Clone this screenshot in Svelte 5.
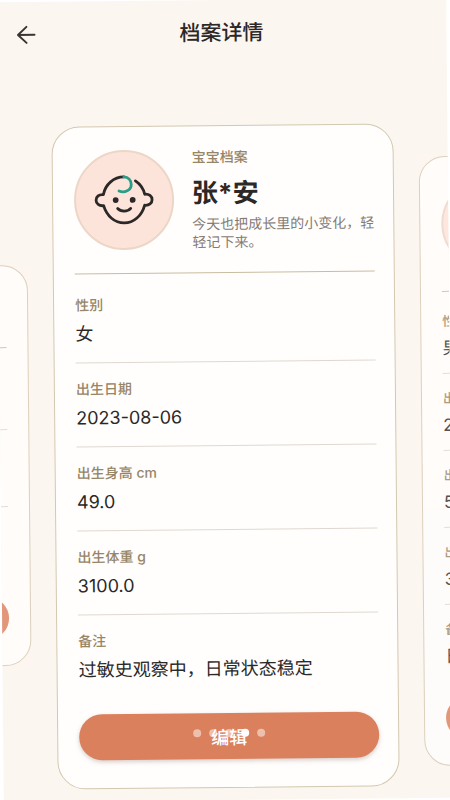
<script lang="ts">
	interface Field {
		label: string;
		value: string;
	}

	interface Profile {
		name: string;
		intro: string;
		fields: Field[];
	}

	const current: Profile = {
		name: '张*安',
		intro: '今天也把成长里的小变化，轻轻记下来。',
		fields: [
			{ label: '性别', value: '女' },
			{ label: '出生日期', value: '2023-08-06' },
			{ label: '出生身高 cm', value: '49.0' },
			{ label: '出生体重 g', value: '3100.0' },
			{ label: '备注', value: '过敏史观察中，日常状态稳定' }
		]
	};

	const next: Field[] = [
		{ label: '性别', value: '男' },
		{ label: '出生日期', value: '2' },
		{ label: '出生身高 cm', value: '5' },
		{ label: '出生体重 g', value: '3' },
		{ label: '备注', value: '日' }
	];

	const pages = [0, 1, 2, 3, 4];
	let page = $state(3);
</script>

<main class="screen">
	<header class="topbar">
		<button class="back" aria-label="返回">
			<svg width="20" height="20" viewBox="0 0 20 20" fill="none" stroke="currentColor" stroke-width="2" stroke-linecap="round" stroke-linejoin="round">
				<path d="M18 10H1.5M10 2L1.5 10l8.500 8" />
			</svg>
		</button>
		<h1>档案详情</h1>
	</header>

	<div class="carousel">
		<article class="card side short">
			<div class="head"></div>
			<div class="row"></div>
			<div class="row"></div>
			<div class="row"></div>
			<div class="edit"></div>
		</article>

		<article class="card">
			<div class="head">
				<div class="avatar">
					<svg width="60" height="54" viewBox="0 0 60 54" fill="none" stroke="#2b2827" stroke-width="2.8" stroke-linecap="round" stroke-linejoin="round">
						<path d="M30 4C20 4 11.500 11 9.300 21.500C5 21 2 23.500 2 27C2 30.500 5 33 9.500 32.500C12.500 43 20.500 50 30 50C39.500 50 47.500 43 50.500 32.500C55 33 58 30.500 58 27C58 23.500 55 21 50.700 21.500C49.500 16 46 11 41.500 8" />
						<path d="M30 4C34.500 4 37.300 7.500 37.300 11.500C37.300 17.500 30.500 20.500 25 18" stroke="#2a9d87" />
						<path d="M23.500 35.500C26.500 39 33.500 39 36.500 35.500" />
						<circle cx="21.600" cy="27" r="2.900" fill="#2b2827" stroke="none" />
						<circle cx="38.600" cy="27" r="2.900" fill="#2b2827" stroke="none" />
					</svg>
				</div>
				<div class="about">
					<span class="kind">宝宝档案</span>
					<h2>{current.name}</h2>
					<p>{current.intro}</p>
				</div>
			</div>
			<dl>
				{#each current.fields as field}
					<div class="row">
						<dt>{field.label}</dt>
						<dd>{field.value}</dd>
					</div>
				{/each}
			</dl>
			<button class="edit">
				编辑
				<span class="dots">
					{#each pages as p}
						<i class:active={p === page}></i>
					{/each}
				</span>
			</button>
		</article>

		<article class="card side">
			<div class="head">
				<div class="avatar"></div>
			</div>
			<dl>
				{#each next as field}
					<div class="row">
						<dt>{field.label}</dt>
						<dd>{field.value}</dd>
					</div>
				{/each}
			</dl>
			<div class="edit"></div>
		</article>
	</div>
</main>

<style>
	:global(body) {
		margin: 0;
		background: #fff;
		overflow: hidden;
	}

	.screen {
		min-height: 100vh;
		overflow: hidden;
		background: #fcf6f0;
		color: #2b2827;
		font-family: Inter, 'Noto Sans CJK SC', sans-serif;
		transform: rotate(-0.55deg);
	}

	button {
		font: inherit;
		border: none;
		padding: 0;
		cursor: pointer;
	}

	.topbar {
		display: grid;
		grid-template-columns: 40px 1fr 40px;
		align-items: center;
		height: 66px;
		padding: 0 20px;
	}

	.back {
		display: flex;
		background: none;
		color: #3a3532;
	}

	h1 {
		margin: 0;
		text-align: center;
		font-size: 21px;
		line-height: 28px;
		font-weight: 500;
	}

	.carousel {
		display: flex;
		justify-content: center;
		align-items: flex-start;
		gap: 25px;
		padding-top: 59px;
	}

	.card {
		box-sizing: border-box;
		flex: 0 0 76%;
		padding: 23px 19px 28px 21px;
		border: 1px solid #d3c8b0;
		border-radius: 28px;
		background: #fffefd;
	}

	.head {
		display: flex;
		gap: 18px;
		height: 123px;
		border-bottom: 1px solid #c9bd9f;
	}

	.avatar {
		box-sizing: border-box;
		flex: none;
		display: flex;
		align-items: center;
		justify-content: center;
		width: 100px;
		height: 100px;
		border: 2px solid #ecd6c6;
		border-radius: 50%;
		background: #fde4da;
	}

	.kind {
		display: block;
		font-size: 14px;
		line-height: 16px;
		font-weight: 500;
		color: #978567;
	}

	h2 {
		margin: 10px 0 4px;
		font-size: 26px;
		line-height: 36px;
		font-weight: 700;
	}

	.about p {
		margin: 0;
		font-size: 14px;
		line-height: 18px;
		color: #857b75;
	}

	dl {
		margin: 0;
		padding-top: 5px;
	}

	.row {
		box-sizing: border-box;
		height: 84px;
		padding-top: 16px;
		border-bottom: 1px solid #dfd8d0;
	}

	.row:last-of-type {
		border-bottom: none;
	}

	dt {
		font-size: 14px;
		line-height: 20px;
		font-weight: 500;
		color: #978567;
	}

	dd {
		margin: 6px 0 0;
		font-size: 18px;
		line-height: 26px;
		white-space: nowrap;
	}

	.edit {
		position: relative;
		display: block;
		width: 100%;
		height: 46px;
		margin-top: 15px;
		border-radius: 23px;
		background: #db805d;
		box-shadow: 0 2px 4px #b4a09880;
		color: #fff;
		font-size: 18px;
		font-weight: 500;
	}

	.dots {
		position: absolute;
		inset: 0 0 6px;
		display: flex;
		align-items: center;
		justify-content: center;
		gap: 8px;
	}

	.dots i {
		width: 8px;
		height: 8px;
		border-radius: 50%;
		background: #ffffff80;
	}

	.dots .active {
		background: #fff;
	}

	.side {
		flex-basis: 70%;
		margin-top: 33px;
		padding: 21px 21px 26px;
		border-radius: 26px;
		opacity: 0.8;
	}

	.side .head {
		height: 113px;
	}

	.side .avatar {
		width: 92px;
		height: 92px;
	}

	.side dl {
		padding-top: 5px;
	}

	.side .row {
		height: 77px;
		padding-top: 15px;
	}

	.side dt {
		font-size: 13px;
		line-height: 18px;
	}

	.side dd {
		font-size: 17px;
		line-height: 24px;
	}

	.side .edit {
		height: 42px;
		box-shadow: none;
	}

	.short {
		margin-top: 138px;
	}

	.short .head {
		height: 60px;
		margin-bottom: 5px;
	}

	.short .row:nth-of-type(4) {
		border-bottom: none;
	}

	.short .edit {
		margin-top: 13px;
	}
</style>
